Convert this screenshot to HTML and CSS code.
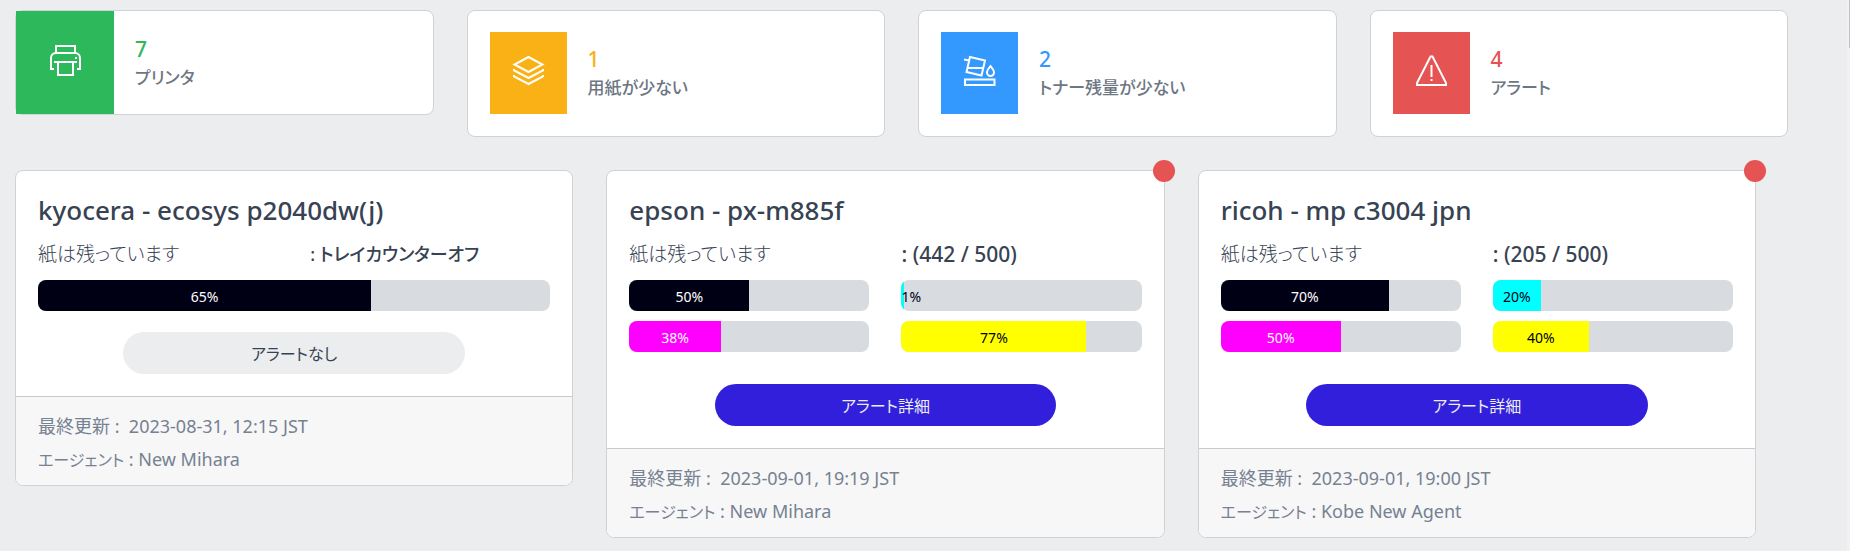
FILE: index.html
```
<!DOCTYPE html>
<html lang="ja">
<head>
  <meta charset="UTF-8">
  <meta name="viewport" content="width=device-width, initial-scale=1.0">
  <title>プリンタ</title>
  <link rel="stylesheet" href="styles.css">
</head>
<body>
  <main>
    <!-- Summary -->
    <section class="stats">
      <div class="stat stat-flush">
        <div class="stat-icon bg-success">
          <svg class="icon" viewBox="0 0 33 33"><path d="M7 9V2h19v7M5 25H2V14a5 5 0 0 1 5-5h19a5 5 0 0 1 5 5v11h-3M5 18h23M9 18v13h15V18M26 14h2"/></svg>
        </div>
        <div class="stat-text">
          <div class="stat-value text-success">7</div>
          <div class="stat-label">プリンタ</div>
        </div>
      </div>
      <div class="stat">
        <div class="stat-icon bg-warning">
          <svg class="icon" viewBox="0 0 33 33"><path d="M16.5 3 30.5 10.5 16.5 18 2.5 10.5ZM2 15v1.5L16.5 24 31 16.5V15M2 21v1.5L16.5 30 31 22.5V21"/></svg>
        </div>
        <div class="stat-text">
          <div class="stat-value text-warning">1</div>
          <div class="stat-label">用紙が少ない</div>
        </div>
      </div>
      <div class="stat">
        <div class="stat-icon bg-info">
          <svg class="icon" viewBox="0 0 33 33"><path d="M7 3 22 6.5 18.5 21.5 3.5 18ZM1 5.5l5 1M5 14h15M27.5 12c-2 2.5-3.5 4.5-3.5 6.5a3.5 3.5 0 0 0 7 0c0-2-1.5-4-3.5-6.5ZM2 25.5h29.5V31H2Z"/></svg>
        </div>
        <div class="stat-text">
          <div class="stat-value text-info">2</div>
          <div class="stat-label">トナー残量が少ない</div>
        </div>
      </div>
      <div class="stat">
        <div class="stat-icon bg-danger">
          <svg class="icon" viewBox="0 0 33 33"><path d="M15.5 2.5h2L31 29v2H2v-2ZM16.5 11v12M16.5 25v2"/></svg>
        </div>
        <div class="stat-text">
          <div class="stat-value text-danger">4</div>
          <div class="stat-label">アラート</div>
        </div>
      </div>
    </section>

    <!-- Printers -->
    <section class="printers">
      <article class="card">
        <div class="card-body">
          <h2>kyocera - ecosys p2040dw(j)</h2>
          <div class="paper">
            <span>紙は残っています</span>
            <strong>: トレイカウンターオフ</strong>
          </div>
          <div class="toners toners-mono">
            <div class="progress"><div class="bar black" style="width: 65%">65%</div></div>
          </div>
          <button type="button" class="btn btn-none">アラートなし</button>
        </div>
        <div class="card-footer">
          <p>最終更新 :&nbsp; 2023-08-31, 12:15 JST</p>
          <p><span class="kana">エージェント</span> : New Mihara</p>
        </div>
      </article>

      <article class="card">
        <span class="alert-dot"></span>
        <div class="card-body">
          <h2>epson - px-m885f</h2>
          <div class="paper">
            <span>紙は残っています</span>
            <strong class="count">: (442 / 500)</strong>
          </div>
          <div class="toners">
            <div class="progress"><div class="bar black" style="width: 50%">50%</div></div>
            <div class="progress"><div class="bar cyan" style="width: 1%">1%</div></div>
            <div class="progress"><div class="bar magenta" style="width: 38%">38%</div></div>
            <div class="progress"><div class="bar yellow" style="width: 77%">77%</div></div>
          </div>
          <button type="button" class="btn btn-primary">アラート詳細</button>
        </div>
        <div class="card-footer">
          <p>最終更新 :&nbsp; 2023-09-01, 19:19 JST</p>
          <p><span class="kana">エージェント</span> : New Mihara</p>
        </div>
      </article>

      <article class="card">
        <span class="alert-dot"></span>
        <div class="card-body">
          <h2>ricoh - mp c3004 jpn</h2>
          <div class="paper">
            <span>紙は残っています</span>
            <strong class="count">: (205 / 500)</strong>
          </div>
          <div class="toners">
            <div class="progress"><div class="bar black" style="width: 70%">70%</div></div>
            <div class="progress"><div class="bar cyan" style="width: 20%">20%</div></div>
            <div class="progress"><div class="bar magenta" style="width: 50%">50%</div></div>
            <div class="progress"><div class="bar yellow" style="width: 40%">40%</div></div>
          </div>
          <button type="button" class="btn btn-primary">アラート詳細</button>
        </div>
        <div class="card-footer">
          <p>最終更新 :&nbsp; 2023-09-01, 19:00 JST</p>
          <p><span class="kana">エージェント</span> : Kobe New Agent</p>
        </div>
      </article>
    </section>
  </main>
  <div class="scroll-track"></div>
</body>
</html>
```
FILE: styles.css
```
* {
  box-sizing: border-box;
}
body {
  margin: 0;
  min-height: 100vh;
  background-color: #ebedef;
  color: #374253;
  font-family: "Noto Sans", "Noto Sans CJK JP", sans-serif;
  font-size: 16px;
  font-feature-settings: "palt";
}
main {
  padding: 10px 62px 0 15px;
}
h2, p {
  margin: 0;
}

/* summary */
.stats {
  display: grid;
  grid-template-columns: repeat(4, 1fr);
  gap: 33px;
  align-items: start;
}
.stat {
  display: flex;
  padding: 21px 22px 22px;
  background-color: #fff;
  border: 1px solid #d0d2d6;
  border-radius: 8px;
}
.stat-flush {
  padding: 0;
}
.stat-icon {
  display: flex;
  align-items: center;
  justify-content: center;
  width: 77px;
  height: 82px;
  padding-bottom: 5px;
}
.stat-flush .stat-icon {
  width: 98px;
  height: 103px;
}
.icon {
  width: 33px;
  height: 33px;
  fill: none;
  stroke: #fff;
  stroke-width: 2;
}
.stat-text {
  display: flex;
  flex-direction: column;
  justify-content: center;
  padding: 2px 0 0 21px;
}
.stat-value {
  font-size: 21px;
  line-height: 28px;
  font-weight: 500;
}
.stat-label {
  font-size: 17px;
  line-height: 30px;
  font-weight: 500;
  color: #6d7683;
}
.bg-success { background-color: #2eb85c; }
.bg-warning { background-color: #f9b115; }
.bg-info { background-color: #3399ff; }
.bg-danger { background-color: #e55353; }
.text-success { color: #2eb85c; }
.text-warning { color: #f9b115; }
.text-info { color: #3399ff; }
.text-danger { color: #e55353; }

/* printers */
.printers {
  display: grid;
  grid-template-columns: repeat(3, 1fr);
  gap: 33px;
  align-items: start;
  margin: 33px 32px 0 0;
}
.card {
  position: relative;
  background-color: #fff;
  border: 1px solid #d0d2d6;
  border-radius: 8px;
}
.card-body {
  padding: 22px;
}
.card h2 {
  font-size: 26px;
  line-height: 34px;
  font-weight: 500;
}
.paper {
  display: grid;
  grid-template-columns: 1fr 1fr;
  column-gap: 32px;
  margin: 11px 0 9px;
  font-size: 19px;
  line-height: 33px;
}
.paper span {
  font-weight: 300;
}
.paper strong {
  font-size: 18px;
  font-weight: 500;
}
.paper .count {
  font-size: 21px;
}
.toners {
  display: grid;
  grid-template-columns: 1fr 1fr;
  gap: 10px 32px;
  margin-bottom: 32px;
}
.toners-mono {
  grid-template-columns: 1fr;
  margin-bottom: 21px;
}
.progress {
  height: 31px;
  overflow: hidden;
  background-color: #d8dbe0;
  border-radius: 8px;
}
.bar {
  display: flex;
  justify-content: safe center;
  font-size: 14px;
  line-height: 33px;
}
.black {
  background-color: #000015;
  color: #fff;
}
.cyan {
  background-color: #00ffff;
  color: #000015;
}
.magenta {
  background-color: #ff00ff;
  color: #fff;
}
.yellow {
  background-color: #ffff00;
  color: #000015;
}
.btn {
  display: block;
  width: 66.667%;
  height: 42px;
  margin: 0 auto;
  padding: 0;
  border: 0;
  border-radius: 21px;
  font: inherit;
  font-feature-settings: inherit;
  cursor: pointer;
}
.btn-none {
  background-color: #ebedef;
  color: #374253;
}
.btn-primary {
  background-color: #321fdb;
  color: #ebedef;
}
.card-footer {
  padding: 13px 22px 8px;
  background-color: #f7f7f7;
  border-top: 1px solid #c8cacd;
  border-radius: 0 0 7px 7px;
  color: #768192;
  font-size: 18px;
  line-height: 33px;
}
.kana {
  font-size: 16px;
}
.alert-dot {
  position: absolute;
  top: -11px;
  right: -11px;
  width: 22px;
  height: 22px;
  background-color: #e55353;
  border-radius: 50%;
}

/* page scrollbar */
.scroll-track {
  position: fixed;
  top: 0;
  right: 0;
  bottom: 0;
  width: 3px;
  background-color: #f1f1f1;
}
.scroll-track::after {
  content: "";
  position: absolute;
  top: 0;
  right: 0;
  width: 1px;
  height: 48px;
  background-color: #c1c1c1;
}
```
